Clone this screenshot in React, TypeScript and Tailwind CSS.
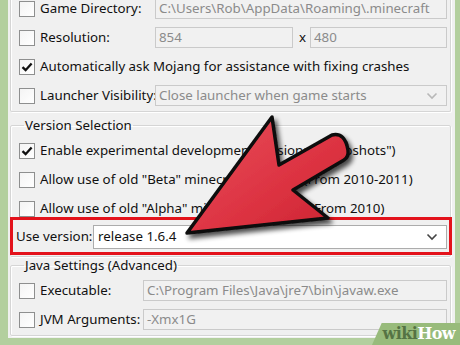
import React from "react";

const font = "font-['Noto_Sans',sans-serif]";

function Check({ on }: { on?: boolean }) {
  return (
    <div className="flex h-[16px] w-[16px] shrink-0 items-center justify-center border border-[#8e8f8f] bg-gradient-to-br from-[#f4f4f4] to-white">
      {on && (
        <svg width="12" height="12" viewBox="0 0 12 12">
          <path d="M1.5 6.2 L4.6 9.2 L10.6 2.4" fill="none" stroke="#111" strokeWidth="2.3" />
        </svg>
      )}
    </div>
  );
}

function Chevron({ dark }: { dark?: boolean }) {
  return (
    <svg width="12" height="8" viewBox="0 0 12 8">
      <path d="M1.5 1.5 L6 6 L10.5 1.5" fill="none" stroke={dark ? "#444" : "#b8b8b8"} strokeWidth="1.6" />
    </svg>
  );
}

function Field({ text, select, className = "" }: { text: string; select?: boolean; className?: string }) {
  return (
    <div className={`flex h-[21px] items-center border border-[#cacaca] bg-[#f1f1f1] pl-[3px] pr-[8px] text-[#8b8b8b] ${className}`}>
      <span className="flex-1 truncate">{text}</span>
      {select && <Chevron />}
    </div>
  );
}

function Row({
  on,
  label,
  labelW,
  children,
}: {
  on?: boolean;
  label: string;
  labelW?: string;
  children?: React.ReactNode;
}) {
  return (
    <div className="flex h-[29px] items-center">
      <Check on={on} />
      <span className={`ml-[5px] shrink-0 whitespace-nowrap ${labelW ?? ""}`}>{label}</span>
      {children}
    </div>
  );
}

function Group({ title, className = "", children }: { title?: string; className?: string; children: React.ReactNode }) {
  return (
    <fieldset className={`ml-[2px] w-[441px] rounded-[2px] border border-[#d5d5d5] pl-[8px] pr-[3px] shadow-[inset_1px_1px_0_#ffffff,1px_1px_0_#ffffff] ${className}`}>
      {title && <legend className="ml-[5px] px-[1px] leading-[17px] text-[#111]">{title}</legend>}
      {children}
    </fieldset>
  );
}

function Arrow() {
  return (
    <svg className="pointer-events-none absolute left-0 top-0" width="460" height="345" viewBox="0 0 460 345">
      <defs>
        <linearGradient id="ar" x1="0" y1="0" x2="1" y2="1">
          <stop offset="0" stopColor="#e9505c" />
          <stop offset="0.6" stopColor="#dc3241" />
          <stop offset="1" stopColor="#c9222f" />
        </linearGradient>
        <filter id="sh" x="-20%" y="-20%" width="140%" height="140%">
          <feGaussianBlur in="SourceAlpha" stdDeviation="2.5" />
          <feOffset dx="3" dy="4" result="b" />
          <feComponentTransfer>
            <feFuncA type="linear" slope="0.7" />
          </feComponentTransfer>
          <feMerge>
            <feMergeNode />
            <feMergeNode in="SourceGraphic" />
          </feMerge>
        </filter>
      </defs>
      <path
        d="M187 233 L272 117 L279 165 L332 135 Q345 132 348 150 Q349 157 344 160 L293 190 L328 218 Z"
        fill="url(#ar)"
        stroke="#0c0c0c"
        strokeWidth="3.5"
        strokeLinejoin="round"
        filter="url(#sh)"
      />
    </svg>
  );
}

export default function App() {
  return (
    <div className={`relative h-[345px] w-[460px] overflow-hidden bg-[#b3cf9e] ${font} text-[13.3px] text-[#111]`}>
      <div className="ml-[8px] h-[338px] w-[447px] overflow-hidden bg-[#f0f0f0]">
        <Group className="-mt-[6px] border-t-0 pb-[1px] pt-0">
          <Row label="Game Directory:" labelW="w-[115px]">
            <Field text="C:\Users\Rob\AppData\Roaming\.minecraft" className="flex-1" />
          </Row>
          <Row label="Resolution:" labelW="w-[115px]">
            <Field text="854" className="w-[138px]" />
            <span className="mx-[6px] w-[5px] text-center">x</span>
            <Field text="480" className="flex-1" />
          </Row>
          <Row on label="Automatically ask Mojang for assistance with fixing crashes" />
          <Row label="Launcher Visibility:" labelW="w-[115px]">
            <Field select text="Close launcher when game starts" className="flex-1" />
          </Row>
        </Group>

        <Group title="Version Selection" className="mt-[5px] h-[140px] pt-[2px]">
          <Row on label='Enable experimental development versions ("snapshots")' />
          <Row label='Allow use of old "Beta" minecraft versions (From 2010-2011)' />
          <Row label='Allow use of old "Alpha" minecraft versions (From 2010)' />
          <div className="-ml-[3px] mt-[1px] flex h-[26px] items-center">
            <span className="w-[77px] shrink-0 whitespace-nowrap">Use version:</span>
            <div className="flex h-[24px] flex-1 items-center border border-[#acacac] bg-white pl-[4px] pr-[8px]">
              <span className="flex-1">release 1.6.4</span>
              <Chevron dark />
            </div>
          </div>
        </Group>

        <Group title="Java Settings (Advanced)" className="mt-[0px] pb-[1px] pt-[2px]">
          <Row label="Executable:" labelW="w-[103px]">
            <Field text="C:\Program Files\Java\jre7\bin\javaw.exe" className="flex-1" />
          </Row>
          <Row label="JVM Arguments:" labelW="w-[103px]">
            <Field text="-Xmx1G" className="flex-1" />
          </Row>
        </Group>
      </div>

      <div className="pointer-events-none absolute left-[10px] top-[217px] h-[38px] w-[442px] border-[3.5px] border-[#e3121b]" />

      <Arrow />

      <div className="absolute bottom-0 right-0 flex h-[22px] w-[88px] items-center justify-end pr-[5px] [clip-path:polygon(11%_0,100%_0,100%_100%,0_100%)] bg-[#98bb7b]">
        <span className="font-['DejaVu_Serif',serif] text-[16px] font-bold leading-none tracking-[-0.6px]">
          <span className="text-[#557344]">wiki</span>
          <span className="text-white">How</span>
        </span>
      </div>
    </div>
  );
}
